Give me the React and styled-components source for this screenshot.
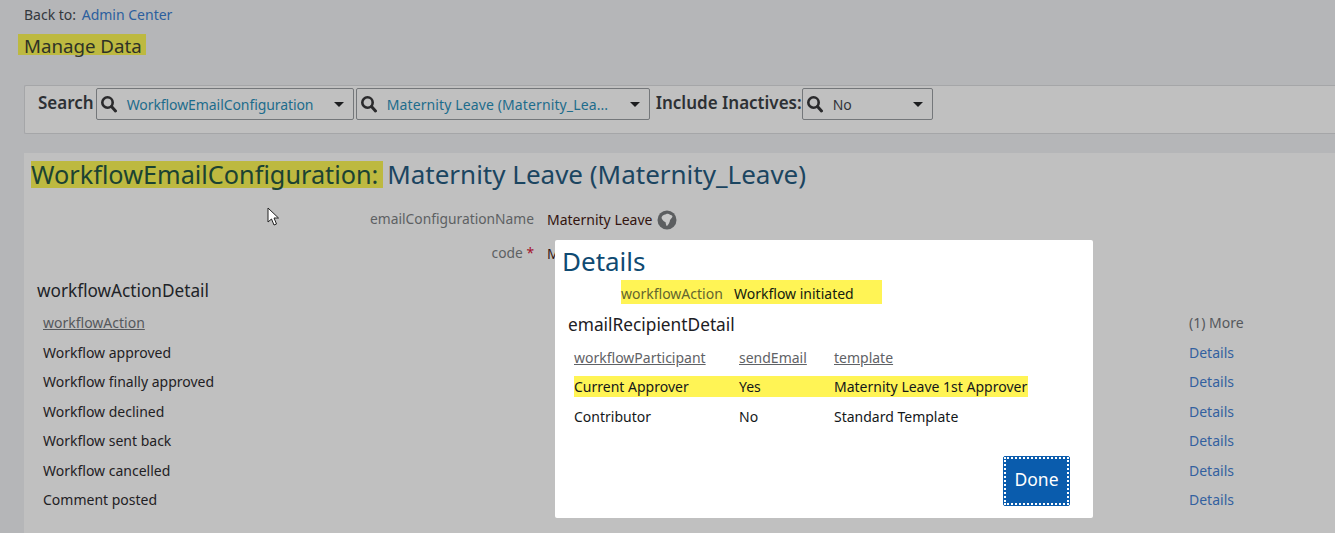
import styled, { createGlobalStyle } from 'styled-components'

const GlobalStyle = createGlobalStyle`
  html, body {
    margin: 0;
    padding: 0;
    background: #b5b6b8;
    font-family: "Noto Sans", "Open Sans", sans-serif;
    overflow: hidden;
  }
`

const Page = styled.div`
  position: relative;
  width: 1335px;
  height: 533px;
  overflow: hidden;
  background: #b5b6b8;
  font-size: 14px;
  color: #1f2124;
`

const BackRow = styled.div`
  height: 20px;
  padding: 5px 0 0 24px;
  line-height: 20px;
  color: #33383d;
`

const BackLink = styled.span`
  margin-left: 2px;
  color: #2c5f9e;
`

const PageTitle = styled.div`
  width: 128px;
  height: 21px;
  margin: 9px 0 0 18px;
  padding-left: 6px;
  box-sizing: border-box;
  background: #bdb940;
  font-size: 18.7px;
  line-height: 24px;
  color: #2e3226;
`

const SearchPanel = styled.div`
  display: flex;
  align-items: flex-start;
  height: 49px;
  box-sizing: border-box;
  margin: 30px 0 0 24px;
  padding: 2px 0 0 13px;
  background: #c0c0c0;
  border: 1px solid #a5a6a8;
  border-right: 0;
  border-radius: 2px 0 0 2px;
`

const SearchLabel = styled.div`
  font-size: 17px;
  font-weight: 600;
  line-height: 30px;
  color: #2d3034;
  margin-right: ${p => p.$gap}px;
`

const Select = styled.div`
  display: flex;
  align-items: center;
  width: ${p => p.$width}px;
  height: 32px;
  box-sizing: border-box;
  margin-right: ${p => p.$gap}px;
  padding: 0 9px 0 3px;
  border: 1px solid #74777a;
  border-radius: 2px;
`

const SelectText = styled.span`
  flex: 1;
  margin-left: 9px;
  white-space: nowrap;
  letter-spacing: ${p => p.$spacing || 0}px;
  color: ${p => (p.$plain ? '#30343a' : '#1d6c8c')};
`

const Caret = styled.span`
  width: 0;
  height: 0;
  border-left: 5px solid transparent;
  border-right: 5px solid transparent;
  border-top: 5px solid #1c1d1f;
`

const ContentPanel = styled.div`
  height: 380px;
  margin: 19px 0 0 24px;
  padding: 8px 0 0 7px;
  box-sizing: border-box;
  background: #c0c0c0;
`

const Heading = styled.h1`
  margin: 0;
  font-size: 26px;
  font-weight: 400;
  line-height: 27px;
  color: #1b4560;
  white-space: nowrap;
`

const HeadingMark = styled.span`
  display: inline-block;
  margin-right: -3px;
  padding-right: 5px;
  background: #bdb940;
  font-size: 25.25px;
  color: #1b4232;
`

const FormRow = styled.div`
  display: grid;
  grid-template-columns: 503px 1fr;
  column-gap: 13px;
  height: 34px;
  line-height: 20px;
  &:first-of-type {
    margin-top: 21px;
  }
`

const FormLabel = styled.div`
  text-align: right;
  font-size: 13.8px;
  color: #5d6063;
`

const Required = styled.span`
  color: #a3112c;
`

const FormValue = styled.div`
  display: flex;
  align-items: center;
  height: 22px;
  gap: 5px;
  color: #33140f;
`

const SectionTitle = styled.div`
  margin: 0 0 0 6px;
  padding-top: 1px;
  font-size: 17.2px;
  line-height: 26px;
  color: #202327;
`

const ActionHead = styled.div`
  display: flex;
  justify-content: space-between;
  margin-top: 8px;
  padding: 0 63px 0 12px;
  height: 25.5px;
  line-height: 22px;
`

const SortLink = styled.span`
  color: ${p => p.$light ? '#5f6266' : '#55585c'};
  text-decoration: underline;
`

const MoreText = styled.span`
  width: 83px;
  color: #55585c;
`

const ActionRow = styled.div`
  display: flex;
  justify-content: space-between;
  height: 29.5px;
  padding: 0 100px 0 12px;
  line-height: 29.5px;
  color: #1f2124;
`

const DetailsLink = styled.span`
  width: 46px;
  color: #33609f;
`

const Modal = styled.div`
  position: absolute;
  left: 555px;
  top: 240px;
  width: 538px;
  height: 278px;
  box-sizing: border-box;
  padding: 2px 7px 0;
  background: #fff;
  border-radius: 2px;
`

const ModalTitle = styled.div`
  font-size: 26px;
  line-height: 38px;
  color: #0f4a72;
`

const ActionField = styled.div`
  display: flex;
  width: 261px;
  height: 24px;
  margin-left: 59px;
  background: #fff455;
  line-height: 27px;
`

const ActionLabel = styled.span`
  width: 113px;
  color: #63652f;
`

const ActionValue = styled.span`
  color: #14200f;
`

const RecipientTitle = styled.div`
  margin: 9px 0 0 6px;
  font-size: 17.3px;
  line-height: 24px;
  color: #1d2024;
`

const RecipientTable = styled.div`
  display: grid;
  grid-template-columns: 165px 95px 1fr;
  margin: 9px 0 0 12px;
`

const Cell = styled.div`
  height: ${p => p.$height}px;
  line-height: ${p => p.$height}px;
  color: #14171a;
`

const MarkedRow = styled.div`
  grid-column: 1 / -1;
  display: grid;
  grid-template-columns: 165px 95px 1fr;
  width: 454px;
  height: 21px;
  margin: 6px 0 5px 0;
  background: #fff455;
`

const DoneRow = styled.div`
  display: flex;
  justify-content: flex-end;
  margin: 24px 16px 0 0;
`

const DoneButton = styled.button`
  width: 67px;
  height: 50px;
  padding: 0;
  background: #0a5cad;
  border: 1px solid #0a5cad;
  border-radius: 2px;
  font-family: inherit;
  font-size: 17.5px;
  color: #fff;
`

const DoneFace = styled.span`
  display: flex;
  align-items: center;
  justify-content: center;
  height: 100%;
  box-sizing: border-box;
  padding-bottom: 4px;
  border: 2px dotted #fff;
`

const Pointer = styled.svg`
  position: absolute;
  left: 267px;
  top: 207px;
`

const SearchIcon = () => (
  <svg width="18" height="18" viewBox="0 0 18 18" fill="none">
    <circle cx="7.5" cy="7.5" r="5.2" stroke="#2a2a2c" strokeWidth="2.6" />
    <path d="M11.5 11.5 L15.5 16" stroke="#2a2a2c" strokeWidth="3" strokeLinecap="round" />
  </svg>
)

const GlobeIcon = () => (
  <svg width="20" height="20" viewBox="0 0 20 20">
    <circle cx="10" cy="10" r="9.5" fill="#5c5e60" />
    <path d="M4.5 8 C4.5 6 6.5 4.5 9 4.2 C10 3.6 12 3.6 13 4.8 C14 5.2 15.2 5.4 15.5 6.2 C15.2 7.8 13.8 9 13 10 C13 12 11.5 14.5 10 16 C9.2 16 8.8 14 8.6 12.2 C7.6 11.6 5.6 10.8 4.5 8 Z" fill="#c8c8c8" />
  </svg>
)

const workflowActions = [
  'Workflow approved',
  'Workflow finally approved',
  'Workflow declined',
  'Workflow sent back',
  'Workflow cancelled',
  'Comment posted',
]

const App = () => {
  return (
    <Page>
      <GlobalStyle />
      <BackRow>Back to: <BackLink>Admin Center</BackLink></BackRow>
      <PageTitle>Manage Data</PageTitle>

      <SearchPanel>
        <SearchLabel $gap={2}>Search</SearchLabel>
        <Select $width={258} $gap={2}>
          <SearchIcon />
          <SelectText $spacing={-0.08}>WorkflowEmailConfiguration</SelectText>
          <Caret />
        </Select>
        <Select $width={294} $gap={6}>
          <SearchIcon />
          <SelectText $spacing={0.12}>Maternity Leave (Maternity_Lea...</SelectText>
          <Caret />
        </Select>
        <SearchLabel $gap={0}>Include Inactives:</SearchLabel>
        <Select $width={131} $gap={0}>
          <SearchIcon />
          <SelectText $plain>No</SelectText>
          <Caret />
        </Select>
      </SearchPanel>

      <ContentPanel>
        <Heading><HeadingMark>WorkflowEmailConfiguration:</HeadingMark> Maternity Leave (Maternity_Leave)</Heading>
        <FormRow>
          <FormLabel>emailConfigurationName</FormLabel>
          <FormValue>Maternity Leave <GlobeIcon /></FormValue>
        </FormRow>
        <FormRow>
          <FormLabel>code <Required>*</Required></FormLabel>
          <FormValue>M</FormValue>
        </FormRow>
        <SectionTitle>workflowActionDetail</SectionTitle>
        <ActionHead>
          <SortLink>workflowAction</SortLink>
          <MoreText>(1) More</MoreText>
        </ActionHead>
        {workflowActions.map((item) => (
          <ActionRow key={item}>
            <span>{item}</span>
            <DetailsLink>Details</DetailsLink>
          </ActionRow>
        ))}
      </ContentPanel>

      <Pointer width="13" height="20" viewBox="0 0 13 20">
        <path d="M1 1 L1 15 L4.5 12 L7 18 L9.5 17 L7 11 L11.5 11 Z" fill="#fff" stroke="#222" strokeWidth="1" />
      </Pointer>

      <Modal>
        <ModalTitle>Details</ModalTitle>
        <ActionField>
          <ActionLabel>workflowAction</ActionLabel>
          <ActionValue>Workflow initiated</ActionValue>
        </ActionField>
        <RecipientTitle>emailRecipientDetail</RecipientTitle>
        <RecipientTable>
          <Cell $height={24}><SortLink $light>workflowParticipant</SortLink></Cell>
          <Cell $height={24}><SortLink $light>sendEmail</SortLink></Cell>
          <Cell $height={24}><SortLink $light>template</SortLink></Cell>
          <MarkedRow>
            <Cell $height={21}>Current Approver</Cell>
            <Cell $height={21}>Yes</Cell>
            <Cell $height={21}>Maternity Leave 1st Approver</Cell>
          </MarkedRow>
          <Cell $height={30}>Contributor</Cell>
          <Cell $height={30}>No</Cell>
          <Cell $height={30}>Standard Template</Cell>
        </RecipientTable>
        <DoneRow>
          <DoneButton><DoneFace>Done</DoneFace></DoneButton>
        </DoneRow>
      </Modal>
    </Page>
  )
}

export default App
